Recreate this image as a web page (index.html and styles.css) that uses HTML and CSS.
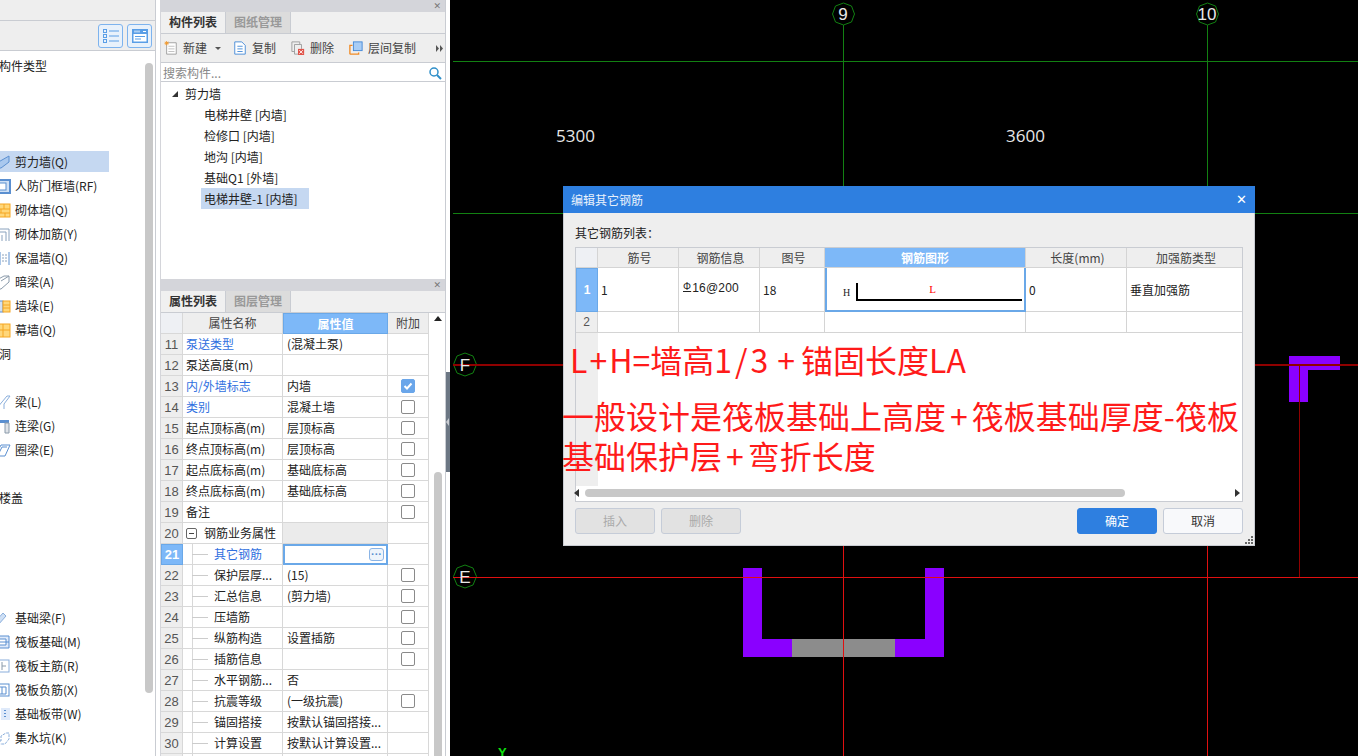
FILE: index.html
```html
<!DOCTYPE html>
<html lang="zh-CN">
<head>
<meta charset="utf-8">
<title>编辑其它钢筋</title>
<link rel="stylesheet" href="styles.css">
</head>
<body>
<div class="app">
  <aside class="nav">
    <div class="nav-top"></div>
    <div class="nav-tools">
      <button class="tool-btn"><svg width="18" height="18" viewBox="0 0 18 18"><g fill="none" stroke="#5a9ee6"><rect x="1.5" y="2.5" width="3" height="3"/><rect x="1.5" y="7.5" width="3" height="3"/><rect x="1.5" y="12.5" width="3" height="3"/><path d="M7 4h10M7 9h10M7 14h10"/></g></svg></button>
      <button class="tool-btn"><svg width="18" height="18" viewBox="0 0 18 18"><rect x="1" y="2" width="16" height="14" fill="#5a9ee6"/><rect x="2.5" y="7" width="13" height="7.5" fill="#fff"/><path d="M4 9.5h10M4 12h6" stroke="#5a9ee6"/><path d="M4 3.5v2M6 3.5v2M8 3.5v2M12 4.5h3" stroke="#fff"/></svg></button>
    </div>
    <div class="nav-body">
      <div class="nav-scroll"></div>
      <ul class="nav-list">
        <li class="nav-head">构件类型</li>
        <li class="nav-item"></li><li class="nav-item"></li><li class="nav-item"></li>
        <li class="nav-item is-active"><svg class="ni" viewBox="0 0 16 16"><path d="M0 10 L14 2 V8 L6 14 H0Z" fill="#a9c8ee" stroke="#5a8fd0"/></svg>剪力墙(Q)</li>
        <li class="nav-item"><svg class="ni" viewBox="0 0 16 16"><rect x="0" y="2" width="15" height="13" fill="#cfe0f5" stroke="#5a8fd0" stroke-width="2"/><rect x="4" y="5" width="7" height="7" fill="#fff" stroke="#5a8fd0"/></svg>人防门框墙(RF)</li>
        <li class="nav-item"><svg class="ni" viewBox="0 0 16 16"><rect x="1" y="2" width="14" height="13" fill="#ffd77a" stroke="#f5a623"/><path d="M1 7h14M1 11h14M9 2v5M6 7v4M10 11v4" stroke="#f5a623"/></svg>砌体墙(Q)</li>
        <li class="nav-item"><svg class="ni" viewBox="0 0 16 16"><path d="M1 15V3h13v12M4 15V6h7v9M7 15V9" fill="none" stroke="#8aa2bd"/></svg>砌体加筋(Y)</li>
        <li class="nav-item"><svg class="ni" viewBox="0 0 16 16"><path d="M5 2v13M14 2v13" stroke="#5a8fd0" fill="none"/><path d="M7 5h5M7 8h5M7 11h5" stroke="#8aa2bd" stroke-dasharray="2 1"/></svg>保温墙(Q)</li>
        <li class="nav-item"><svg class="ni" viewBox="0 0 16 16"><path d="M0 7 L9 2 H14 V8 L6 15 H0Z" fill="#fff" stroke="#8a9aaa"/><path d="M6 7 L14 2" stroke="#8a9aaa"/></svg>暗梁(A)</li>
        <li class="nav-item"><svg class="ni" viewBox="0 0 16 16"><rect x="0" y="3" width="8" height="11" fill="#cfe0f5" stroke="#5a8fd0"/><rect x="8" y="3" width="7" height="11" fill="#ffd77a" stroke="#f5a623"/><path d="M8 7h7M8 10h7" stroke="#f5a623"/></svg>墙垛(E)</li>
        <li class="nav-item"><svg class="ni" viewBox="0 0 16 16"><rect x="1" y="2" width="14" height="13" fill="#ffd77a" stroke="#f5a623"/><path d="M1 8h14M8 2v13" stroke="#f5a623"/></svg>幕墙(Q)</li>
        <li class="nav-head">洞</li>
        <li class="nav-item"></li>
        <li class="nav-item"><svg class="ni" viewBox="0 0 16 16"><path d="M2 14 L12 2 H15 L9 10 V15" fill="none" stroke="#8aaedb"/></svg>梁(L)</li>
        <li class="nav-item"><svg class="ni" viewBox="0 0 16 16"><path d="M0 2h14v3H0Z" fill="#5a8fd0"/><path d="M10 5h4v10h-4z" fill="#dfe3e8" stroke="#8a9aaa"/></svg>连梁(G)</li>
        <li class="nav-item"><svg class="ni" viewBox="0 0 16 16"><path d="M0 14 L6 3 H15 L10 14Z M3 13 L7 5 H12" fill="#fff" stroke="#5a8fd0"/></svg>圈梁(E)</li>
        <li class="nav-item"></li>
        <li class="nav-head">楼盖</li>
        <li class="nav-item"></li><li class="nav-item"></li><li class="nav-item"></li><li class="nav-item"></li>
        <li class="nav-item"><svg class="ni" viewBox="0 0 16 16"><path d="M0 12 L8 3 L11 6 L3 15Z" fill="#cfe0f5" stroke="#8aaedb"/></svg>基础梁(F)</li>
        <li class="nav-item"><svg class="ni" viewBox="0 0 16 16"><path d="M0 2h14v12H0" fill="#dfeafa" stroke="#5a8fd0"/><path d="M4 5h7v6H4M1 8h13" fill="#fff" stroke="#5a8fd0"/></svg>筏板基础(M)</li>
        <li class="nav-item"><svg class="ni" viewBox="0 0 16 16"><rect x="0" y="2" width="14" height="12" fill="#fff" stroke="#8aaedb"/><path d="M7 4v8M7 8h4" stroke="#8a9aaa" fill="none"/></svg>筏板主筋(R)</li>
        <li class="nav-item"><svg class="ni" viewBox="0 0 16 16"><rect x="0" y="2" width="14" height="12" fill="#fff" stroke="#5a8fd0"/><path d="M4 5h7v7H4M7 5v7" fill="none" stroke="#5a8fd0"/></svg>筏板负筋(X)</li>
        <li class="nav-item"><svg class="ni" viewBox="0 0 16 16"><rect x="6" y="2" width="9" height="12" fill="#dfeafa"/><path d="M10 4v1M10 7v1M10 10v1" stroke="#5a8fd0" stroke-width="2"/></svg>基础板带(W)</li>
        <li class="nav-item"><svg class="ni" viewBox="0 0 16 16"><path d="M1 11h5V6l5-3h3v6l-4 5H1z" fill="#fff" stroke="#8aaedb" stroke-dasharray="3 1"/></svg>集水坑(K)</li>
      </ul>
    </div>
  </aside>

  <section class="mid">
    <div class="panel panel-list">
      <div class="pin"><span class="pin-x">✕</span></div>
      <div class="tabs"><span class="tab is-on">构件列表</span><span class="tab">图纸管理</span></div>
      <div class="toolbar">
        <span class="tb"><svg class="ti" viewBox="0 0 16 16"><path d="M3 2h11v13H3z" fill="#fff" stroke="#999"/><path d="M5 6h7M5 9h7M5 12h7" stroke="#bbb"/><path d="M3 0v5M0.5 2.500h5M1 1l4 3M5 1L1 4" stroke="#f29a2e"/></svg>新建<i class="caret"></i></span>
        <span class="tb"><svg class="ti" viewBox="0 0 16 16"><path d="M2 1h8l4 4v10H2z" fill="#fff" stroke="#3e86d6"/><path d="M5 6h6M5 9h6M5 12h6" stroke="#3e86d6"/></svg>复制</span>
        <span class="tb"><svg class="ti" viewBox="0 0 16 16"><path d="M1 1h9v3M1 1v11h3" fill="none" stroke="#999"/><path d="M4 4h8v5M4 4v11h4" fill="none" stroke="#999"/><rect x="8" y="9" width="7" height="7" fill="#e0544a"/><path d="M9.500 10.500l4 4M13.500 10.500l-4 4" stroke="#fff"/></svg>删除</span>
        <span class="tb"><svg class="ti" viewBox="0 0 16 16"><path d="M1 15V5h3M1 15h10v-2" fill="none" stroke="#f08a24" stroke-width="1.500"/><rect x="5" y="1" width="10" height="10" fill="#a9cdf5" stroke="#3e86d6"/></svg>层间复制</span>
        <svg class="more" width="8" height="7" viewBox="0 0 8 7"><path d="M0 0l3 3.500L0 7zM4 0l3 3.500L4 7z" fill="#555"/></svg>
      </div>
      <div class="search"><span>搜索构件...</span><svg width="14" height="14" viewBox="0 0 14 14"><circle cx="6" cy="6" r="4" fill="none" stroke="#2f8fc9" stroke-width="1.500"/><path d="M9 9l4 4" stroke="#2f8fc9" stroke-width="2"/></svg></div>
      <div class="tree">
        <div class="tree-root"><i class="tri"></i>剪力墙</div>
        <div class="tree-leaf">电梯井壁 [内墙]</div>
        <div class="tree-leaf">检修口 [内墙]</div>
        <div class="tree-leaf">地沟 [内墙]</div>
        <div class="tree-leaf">基础Q1 [外墙]</div>
        <div class="tree-leaf is-on">电梯井壁-1 [内墙]</div>
      </div>
    </div>
    <div class="panel panel-props">
      <div class="pin"><span class="pin-x">✕</span></div>
      <div class="tabs"><span class="tab is-on">属性列表</span><span class="tab">图层管理</span></div>
      <div class="props">
        <div class="grid">
          <div class="row row-h"><b class="n n-h"></b><b class="k k-h">属性名称</b><b class="v v-h">属性值</b><b class="a a-h">附加</b></div>
          <div class="row"><b class="n">11</b><span class="k link">泵送类型</span><span class="v">(混凝土泵)</span><span class="a"></span></div>
          <div class="row"><b class="n">12</b><span class="k">泵送高度(m)</span><span class="v"></span><span class="a"></span></div>
          <div class="row"><b class="n">13</b><span class="k link">内/外墙标志</span><span class="v">内墙</span><span class="a"><i class="cb is-on"><svg width="14" height="14" viewBox="0 0 14 14"><path d="M2.500 6l2.500 2.500 4.500-5" fill="none" stroke="#fff" stroke-width="2"/></svg></i></span></div>
          <div class="row"><b class="n">14</b><span class="k link">类别</span><span class="v">混凝土墙</span><span class="a"><i class="cb"></i></span></div>
          <div class="row"><b class="n">15</b><span class="k">起点顶标高(m)</span><span class="v">层顶标高</span><span class="a"><i class="cb"></i></span></div>
          <div class="row"><b class="n">16</b><span class="k">终点顶标高(m)</span><span class="v">层顶标高</span><span class="a"><i class="cb"></i></span></div>
          <div class="row"><b class="n">17</b><span class="k">起点底标高(m)</span><span class="v">基础底标高</span><span class="a"><i class="cb"></i></span></div>
          <div class="row"><b class="n">18</b><span class="k">终点底标高(m)</span><span class="v">基础底标高</span><span class="a"><i class="cb"></i></span></div>
          <div class="row"><b class="n">19</b><span class="k">备注</span><span class="v"></span><span class="a"><i class="cb"></i></span></div>
          <div class="row"><b class="n">20</b><span class="k k-group"><i class="minus"></i>钢筋业务属性</span><span class="v v-group"></span><span class="a"></span></div>
          <div class="row"><b class="n n-on">21</b><span class="k k-sub link"><i class="dash"></i>其它钢筋</span><span class="v v-on"><i class="dots">···</i></span><span class="a"></span></div>
          <div class="row"><b class="n">22</b><span class="k k-sub"><i class="dash"></i>保护层厚...</span><span class="v">(15)</span><span class="a"><i class="cb"></i></span></div>
          <div class="row"><b class="n">23</b><span class="k k-sub"><i class="dash"></i>汇总信息</span><span class="v">(剪力墙)</span><span class="a"><i class="cb"></i></span></div>
          <div class="row"><b class="n">24</b><span class="k k-sub"><i class="dash"></i>压墙筋</span><span class="v"></span><span class="a"><i class="cb"></i></span></div>
          <div class="row"><b class="n">25</b><span class="k k-sub"><i class="dash"></i>纵筋构造</span><span class="v">设置插筋</span><span class="a"><i class="cb"></i></span></div>
          <div class="row"><b class="n">26</b><span class="k k-sub"><i class="dash"></i>插筋信息</span><span class="v"></span><span class="a"><i class="cb"></i></span></div>
          <div class="row"><b class="n">27</b><span class="k k-sub"><i class="dash"></i>水平钢筋...</span><span class="v">否</span><span class="a"></span></div>
          <div class="row"><b class="n">28</b><span class="k k-sub"><i class="dash"></i>抗震等级</span><span class="v">(一级抗震)</span><span class="a"><i class="cb"></i></span></div>
          <div class="row"><b class="n">29</b><span class="k k-sub"><i class="dash"></i>锚固搭接</span><span class="v">按默认锚固搭接...</span><span class="a"></span></div>
          <div class="row"><b class="n">30</b><span class="k k-sub"><i class="dash"></i>计算设置</span><span class="v">按默认计算设置...</span><span class="a"></span></div>
          <div class="row"><b class="n"></b><span class="k k-sub"></span><span class="v"></span><span class="a"></span></div>
        </div>
        <div class="vscroll"><i class="up"></i><i class="thumb"></i></div>
      </div>
    </div>
  </section>

  <div class="split"><i class="grip"></i></div>

  <main class="canvas">
    <svg class="drawing" width="908" height="756" viewBox="450 0 908 756" shape-rendering="crispEdges">
      <g stroke="#128012" fill="none">
        <path d="M453 61.500H1358M453 213.500H1358M843.500 25V213M1207.500 25V213"/>
        <g shape-rendering="auto">
          <path d="M843.500 3l8 3 3 8-3 8-8 3-8-3-3-8 3-8zM1207.500 3l8 3 3 8-3 8-8 3-8-3-3-8 3-8zM465 353l8 3 3.500 8.500-3.500 8.500-8 3-8-3-3.500-8.500 3.500-8.500zM465 565l8 3 3.500 8.500-3.500 8.500-8 3-8-3-3.500-8.500 3.500-8.500z"/>
        </g>
      </g>
      <path d="M1289 356H1340V370H1307.500V402H1289Z" fill="#8a00ff"/>
      <path d="M743 568H762V639H925V568H944V657H743Z" fill="#8a00ff"/>
      <rect x="792" y="639" width="103" height="18" fill="#8c8c8c"/>
      <path d="M453 365H563M1255 365H1358" stroke="#8f0000" stroke-width="2" fill="none"/>
      <path d="M1299.500 365V577" stroke="#8f0000" fill="none"/>
      <path d="M453 577.500H1358M843.500 546V756M1207.500 546V756" stroke="#e01010" fill="none"/>
    </svg>
    <span class="axis a9">9</span>
    <span class="axis a10">10</span>
    <span class="axis aF">F</span>
    <span class="axis aE">E</span>
    <span class="dim d1">5300</span>
    <span class="dim d2">3600</span>
    <span class="yaxis">Y</span>

    <div class="dialog">
      <div class="dlg-title"><span>编辑其它钢筋</span><span class="dlg-x">✕</span></div>
      <div class="dlg-body">
        <div class="dlg-label">其它钢筋列表：</div>
        <div class="rebar">
          <div class="rb-row rb-h"><b class="c0 c0-h"></b><b class="c1">筋号</b><b class="c2">钢筋信息</b><b class="c3">图号</b><b class="c4 c4-h">钢筋图形</b><b class="c5">长度(mm)</b><b class="c6">加强筋类型</b></div>
          <div class="rb-row rb-1"><b class="c0 c0-on">1</b><span class="c1">1</span><span class="c2 c2-v"><i class="grade">Φ</i>16@200</span><span class="c3">18</span>
            <span class="c4 c4-on"><span class="h-mark">H</span><span class="bar"><span class="l-mark">L</span></span></span>
            <span class="c5">0</span><span class="c6">垂直加强筋</span></div>
          <div class="rb-row rb-2"><b class="c0">2</b><span class="c1"></span><span class="c2"></span><span class="c3"></span><span class="c4"></span><span class="c5"></span><span class="c6"></span></div>
          <div class="rb-blank"><i class="c0 c0-fill"></i></div>
          <div class="hscroll"><i class="arrow-l"></i><i class="hthumb"></i><i class="arrow-r"></i></div>
        </div>
        <div class="dlg-btns">
          <button class="btn btn-off">插入</button>
          <button class="btn btn-off">删除</button>
          <span class="spacer"></span>
          <button class="btn btn-ok">确定</button>
          <button class="btn btn-cancel">取消</button>
        </div>
      </div>
      <svg class="resize" width="10" height="10" viewBox="0 0 10 10"><path d="M7 1h2v2H7zM4 4h2v2H4zM7 4h2v2H7zM1 7h2v2H1zM4 7h2v2H4zM7 7h2v2H7z" fill="#666"/></svg>
      <div class="note">
        <p class="note-1">L<span class="pl">+</span>H=墙高<span class="fr">1/3</span><span class="pl-w">+</span>锚固长度LA</p>
        <p class="note-2">一般设计是筏板基础上高度<span class="pl-m">+</span>筏板基础厚度-筏板<br>基础保护层<span class="pl-m">+</span>弯折长度</p>
      </div>
    </div>
  </main>
</div>
</body>
</html>
```
FILE: styles.css
```css
* { box-sizing: border-box; }
html, body { margin: 0; height: 100%; overflow: hidden; background: #000; }
body { font: 12px/1 "Noto Sans CJK SC", "Liberation Sans", sans-serif; color: #333; }
ul { list-style: none; margin: 0; padding: 0; }
p { margin: 0; }
b, i { font-weight: normal; font-style: normal; }
button { font: inherit; padding: 0; }

.app { display: flex; width: 1358px; height: 756px; overflow: hidden; }

/* left navigator */
.nav { width: 160px; flex: none; background: #fff; display: flex; flex-direction: column; overflow: hidden; }
.nav-top { height: 21px; flex: none; width: 156px; background: #eee; border-bottom: 1px solid #c9ccd2; border-right: 1px solid #c9ccd2; }
.nav-tools { height: 30px; flex: none; width: 156px; background: #eee; border-bottom: 1px solid #c9ccd2; border-right: 1px solid #c9ccd2; display: flex; justify-content: flex-end; align-items: center; gap: 4px; padding-right: 3px; }
.tool-btn { width: 25px; height: 24px; border: 1px solid #7db3ee; border-radius: 3px; background: #e8f1fb; display: flex; align-items: center; justify-content: center; }
.nav-body { flex: 1; position: relative; width: 156px; border-right: 1px solid #c9ccd2; }
.nav-scroll { position: absolute; left: 145px; top: 12px; width: 8px; height: 630px; background: #c8c8c8; border-radius: 4px; }
.nav-list { padding-top: 3px; }
.nav-head, .nav-item { height: 24px; display: flex; align-items: center; white-space: nowrap; color: #222; }
.nav-head { margin-left: -1px; }
.nav-item { margin-left: -5px; padding-left: 0; gap: 4px; width: 114px; }
.nav-item.is-active { background: linear-gradient(#fff 1px, #c5d8f1 1px, #c5d8f1 22px, #fff 22px); }
.ni { width: 16px; height: 16px; flex: none; }

/* middle */
.mid { width: 285px; flex: none; background: #fff; display: flex; flex-direction: column; gap: 4px; border-left: 1px solid #d4d5da; }
.panel { display: flex; flex-direction: column; min-height: 0; }
.panel-list { height: 275px; flex: none; }
.panel-props { flex: 1; overflow: hidden; }
.pin { height: 12px; flex: none; background: #d4d5da; display: flex; justify-content: flex-end; align-items: center; padding-right: 4px; }
.pin-x { font-size: 9px; color: #777; font-family: "DejaVu Sans", sans-serif; }
.tabs { height: 22px; flex: none; background: #f0f0f0; display: flex; border-bottom: 1px solid #c9ccd2; }
.tab { width: 65px; display: flex; align-items: center; justify-content: center; padding-bottom: 1px; background: #dcdcdc; color: #999; font-weight: 700; border-right: 1px solid #c9ccd2; }
.tab.is-on { background: #f0f0f0; color: #333; }
.toolbar { height: 29px; flex: none; background: #eee; border-bottom: 1px solid #c9ccd2; display: flex; align-items: center; padding-left: 3px; position: relative; color: #444; }
.tb { display: flex; align-items: center; gap: 5px; margin-right: 15px; }
.ti { width: 14px; height: 16px; flex: none; }
.caret { width: 0; height: 0; border: 3px solid transparent; border-top: 3px solid #555; border-bottom: 0; margin-left: 3px; margin-right: -3px; }
.more { position: absolute; right: 1px; top: 11px; }
.search { height: 19px; flex: none; display: flex; align-items: center; justify-content: space-between; padding: 1px 3px 0 2px; color: #888; border-bottom: 1px solid #c9ccd2; }
.tree { flex: 1; color: #222; padding-top: 1px; }
.tree-root { height: 21px; display: flex; align-items: center; padding-left: 11px; gap: 7px; }
.tri { width: 0; height: 0; border-left: 6px solid transparent; border-bottom: 6px solid #333; }
.tree-leaf { height: 21px; display: flex; align-items: center; padding-left: 43px; }
.tree-leaf.is-on { background: #c5d8f1; margin-left: 40px; padding-left: 3px; width: 108px; }

.props { flex: 1; display: flex; }
.grid { width: 268px; flex: none; }
.row { height: 21px; display: flex; }
.row > * { display: flex; align-items: center; border-bottom: 1px solid #d8d8d8; border-right: 1px solid #d8d8d8; white-space: nowrap; }
.n { width: 22px; background: #eee; justify-content: center; font-size: 13px; color: #555; font-family: "Liberation Sans", sans-serif; }
.k { width: 100px; padding-left: 3px; color: #222; }
.v { width: 105px; padding-left: 4px; color: #222; }
.a { width: 41px; justify-content: center; }
.row-h > * { background: #eee; justify-content: center; color: #444; font-size: 12px; padding: 0; }
.n-h { background: #eef0f4 !important; }
.v-h { background: #7db8f8 !important; color: #fff !important; font-weight: 700; border: 1px solid #6aa8e8; }
.link { color: #2f6fe0; }
.k-group { padding-left: 3px; gap: 7px; }
.minus { width: 11px; height: 11px; border: 1px solid #666; border-radius: 2px; position: relative; flex: none; }
.minus::after { content: ""; position: absolute; left: 2px; right: 2px; top: 4px; height: 1px; background: #444; }
.v-group { background: #ebebeb; }
.k-sub { padding-left: 0; gap: 6px; box-shadow: inset 9px 0 0 #fff, inset 10px 0 0 #d8d8d8; }
.dash { width: 16px; height: 1px; background: #ccc; margin-left: 9px; flex: none; }
.n-on { background: #7db8f8; color: #fff; font-weight: 700; border: 1px solid #6aa8e8; }
.v-on { border: 2px solid #6aa8e8; justify-content: flex-end; padding-right: 2px; }
.dots { width: 15px; height: 13px; border: 1px solid #8ab4e6; border-radius: 3px; background: #eef4fb; color: #5a8fd0; display: flex; align-items: center; justify-content: center; font: 700 11px/1 "Liberation Sans", sans-serif; }
.cb { width: 14px; height: 14px; border: 1px solid #8a8a8a; border-radius: 2px; background: #fff; display: block; }
.cb.is-on { background: #6aa6ea; border-color: #6aa6ea; }
.vscroll { width: 16px; flex: none; position: relative; }
.up { position: absolute; left: 5px; top: 3px; width: 0; height: 0; border: 4px solid transparent; border-bottom: 5px solid #222; border-top: 0; }
.thumb { position: absolute; left: 5px; top: 159px; width: 8px; height: 300px; border-radius: 4px; background: #c8c8c8; }

.split { width: 5px; flex: none; background: #fff; position: relative; border-left: 1px solid #c9ccd2; }
.grip { position: absolute; left: 0; top: 372px; width: 4px; height: 100px; background: #6c7784; }
.grip::after { content: ""; position: absolute; left: 0; top: 46px; border: 4px solid transparent; border-right: 3px solid #c9ccd2; border-left: 0; }

/* canvas */
.canvas { flex: 1; background: #000; position: relative; overflow: hidden; }
.drawing { position: absolute; left: 0; top: 0; display: block; }
.axis { position: absolute; color: #e8e8e8; font-size: 17px; font-family: "Liberation Sans", sans-serif; transform: translate(-50%, -50%); }
.a9 { left: 393px; top: 14px; }
.a10 { left: 757px; top: 14px; }
.aF { left: 15px; top: 365px; }
.aE { left: 15px; top: 577px; }
.dim { position: absolute; color: #e8e8e8; font-size: 17px; font-family: "Open Sans", sans-serif; }
.d1 { left: 106px; top: 127px; }
.d2 { left: 556px; top: 127px; }
.yaxis { position: absolute; left: 48px; top: 746px; color: #0ee00e; font-size: 13px; font-weight: 700; font-family: "Liberation Sans", sans-serif; }

/* dialog */
.dialog { position: absolute; left: 113px; top: 186px; width: 692px; height: 360px; background: #eee; display: flex; flex-direction: column; border: 1px solid #c9ccd2; border-top: 0; }
.dlg-title { height: 27px; flex: none; margin: 0 -1px; background: #2e7fe0; color: #e8f1fc; display: flex; align-items: center; justify-content: space-between; padding: 0 8px; }
.dlg-x { font-size: 13px; color: #fff; font-family: "DejaVu Sans", sans-serif; }
.dlg-body { flex: 1; padding: 0 11px 0 11px; display: flex; flex-direction: column; }
.dlg-label { height: 34px; flex: none; display: flex; align-items: center; color: #222; padding-top: 5px; }
.rebar { height: 255px; flex: none; background: #fff; border: 1px solid #c9ccd2; display: flex; flex-direction: column; }
.rb-row { display: flex; flex: none; }
.rb-row > * { display: flex; align-items: center; border-right: 1px solid #d4d4d4; border-bottom: 1px solid #d4d4d4; }
.rb-h { height: 20px; }
.rb-h > * { justify-content: center; background: #eee; color: #444; }
.rb-1 { height: 44px; color: #222; }
.rb-2 { height: 21px; }
.c0 { width: 22px; justify-content: center; background: #eee; color: #555; flex: none; font-family: "Liberation Sans", sans-serif; }
.c0-h { background: #eef0f4 !important; }
.c0-on { background: #7db8f8; color: #fff; font-weight: 700; border: 1px solid #6aa8e8; }
.c1 { width: 81px; padding-left: 3px; }
.c2 { width: 81px; padding-left: 3px; }
.c2-v { align-items: flex-start; padding-top: 14px; padding-left: 4px; font-family: "Liberation Sans", sans-serif; letter-spacing: .2px; }
.grade { font-size: 10px; text-decoration: underline; margin-right: 1px; }
.c3 { width: 65px; padding-left: 3px; }
.c4 { width: 201px; }
.c4-h { background: #7db8f8 !important; color: #fff !important; font-weight: 700; }
.c4-on { border: 2px solid #6aa8e8; border-top: 0; padding-left: 16px; align-items: flex-start; padding-top: 15px; gap: 6px; }
.c5 { width: 101px; padding-left: 3px; }
.c6 { flex: 1; padding-left: 3px; border-right: 0 !important; }
.h-mark { font: 10px "Liberation Serif", serif; margin-top: 4px; }
.bar { width: 166px; height: 18px; flex: none; border-left: 2px solid #000; border-bottom: 2px solid #000; position: relative; }
.l-mark { color: #f00; font: 11px "Liberation Serif", serif; position: absolute; left: 71px; top: 0; }
.rb-blank { flex: 1; display: flex; min-height: 0; }
.c0-fill { display: block; }
.hscroll { height: 15px; flex: none; position: relative; }
.hthumb { position: absolute; left: 9px; top: 3px; width: 540px; height: 8px; border-radius: 4px; background: #c8c8c8; }
.arrow-l, .arrow-r { position: absolute; top: 3px; width: 0; height: 0; border: 4px solid transparent; }
.arrow-l { left: -2px; border-right: 5px solid #333; border-left: 0; }
.arrow-r { right: 2px; border-left: 5px solid #333; border-right: 0; }
.dlg-btns { display: flex; gap: 6px; margin-top: 6px; }
.spacer { flex: 1; }
.btn { width: 80px; height: 26px; border-radius: 3px; border: 1px solid #c5ccd8; }
.btn-off { background: #e2e2e2; color: #aaa; }
.btn-ok { background: #2e7fe0; border-color: #2e7fe0; color: #fff; }
.btn-cancel { background: #f8f9fb; color: #333; }
.resize { position: absolute; right: 0; bottom: 0; }

/* red annotation */
.note { position: absolute; left: 0; top: 0; color: #ff1a1a; font-size: 32px; white-space: nowrap; font-family: "Noto Sans CJK SC", sans-serif; }
.note-1 { position: absolute; left: 6px; top: 153px; line-height: 40px; }
.note-2 { position: absolute; left: -2px; top: 209px; line-height: 40px; }
.pl { padding: 0 2px; }
.fr { letter-spacing: 3px; }
.pl-w { padding: 0 6px; }
.pl-m { padding: 0 4px; }
```
